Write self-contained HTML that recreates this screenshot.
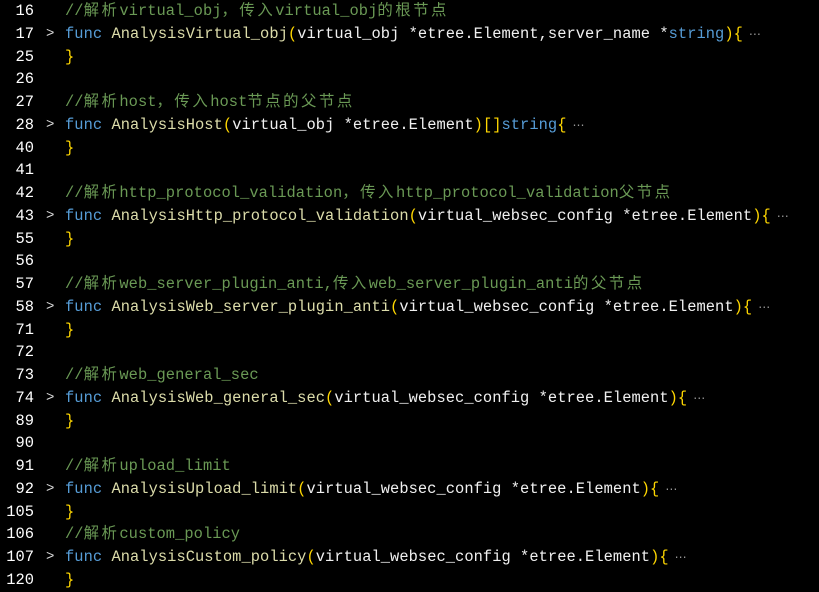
<!DOCTYPE html>
<html><head><meta charset="utf-8"><style>
html,body{margin:0;padding:0;background:#000;width:819px;height:591px;overflow:hidden}
.l{position:absolute;left:0;height:23px;line-height:23px;font-family:"Liberation Mono","Noto Sans CJK SC",monospace;font-size:15.4px;color:#f0f0f0;white-space:pre}
.n{position:absolute;left:0;width:34px;text-align:right;color:#fff}
.a{position:absolute;left:46px;color:#ddd;font-size:14px}
.c{position:absolute;left:65px;letter-spacing:0.05px}
.cm{color:#6a9955}
.z{letter-spacing:2.5px}
.k{color:#569cd6}
.f{color:#dcdcaa}
.p{color:#ffd700}
.e{color:#999;font-family:"DejaVu Sans",sans-serif;font-size:12px;margin-left:6px}
</style></head><body>
<div class="l" style="top:0px"><span class="n">16</span><span class="c cm">//<span class="z">解析</span>virtual_obj<span class="z">，传入</span>virtual_obj<span class="z">的根节点</span></span></div>
<div class="l" style="top:22.76px"><span class="n">17</span><span class="a">&gt;</span><span class="c"><span class="k">func</span> <span class="f">AnalysisVirtual_obj</span><span class="p">(</span>virtual_obj *etree.Element,server_name *<span class="k">string</span><span class="p">){</span><span class="e">⋯</span></span></div>
<div class="l" style="top:45.52px"><span class="n">25</span><span class="c p">}</span></div>
<div class="l" style="top:68.28px"><span class="n">26</span></div>
<div class="l" style="top:91.04px"><span class="n">27</span><span class="c cm">//<span class="z">解析</span>host<span class="z">，传入</span>host<span class="z">节点的父节点</span></span></div>
<div class="l" style="top:113.8px"><span class="n">28</span><span class="a">&gt;</span><span class="c"><span class="k">func</span> <span class="f">AnalysisHost</span><span class="p">(</span>virtual_obj *etree.Element<span class="p">)[]</span><span class="k">string</span><span class="p">{</span><span class="e">⋯</span></span></div>
<div class="l" style="top:136.56px"><span class="n">40</span><span class="c p">}</span></div>
<div class="l" style="top:159.32px"><span class="n">41</span></div>
<div class="l" style="top:182.08px"><span class="n">42</span><span class="c cm">//<span class="z">解析</span>http_protocol_validation<span class="z">，传入</span>http_protocol_validation<span class="z">父节点</span></span></div>
<div class="l" style="top:204.84px"><span class="n">43</span><span class="a">&gt;</span><span class="c"><span class="k">func</span> <span class="f">AnalysisHttp_protocol_validation</span><span class="p">(</span>virtual_websec_config *etree.Element<span class="p">){</span><span class="e">⋯</span></span></div>
<div class="l" style="top:227.6px"><span class="n">55</span><span class="c p">}</span></div>
<div class="l" style="top:250.36px"><span class="n">56</span></div>
<div class="l" style="top:273.12px"><span class="n">57</span><span class="c cm">//<span class="z">解析</span>web_server_plugin_anti,<span class="z">传入</span>web_server_plugin_anti<span class="z">的父节点</span></span></div>
<div class="l" style="top:295.88px"><span class="n">58</span><span class="a">&gt;</span><span class="c"><span class="k">func</span> <span class="f">AnalysisWeb_server_plugin_anti</span><span class="p">(</span>virtual_websec_config *etree.Element<span class="p">){</span><span class="e">⋯</span></span></div>
<div class="l" style="top:318.64px"><span class="n">71</span><span class="c p">}</span></div>
<div class="l" style="top:341.4px"><span class="n">72</span></div>
<div class="l" style="top:364.16px"><span class="n">73</span><span class="c cm">//<span class="z">解析</span>web_general_sec</span></div>
<div class="l" style="top:386.92px"><span class="n">74</span><span class="a">&gt;</span><span class="c"><span class="k">func</span> <span class="f">AnalysisWeb_general_sec</span><span class="p">(</span>virtual_websec_config *etree.Element<span class="p">){</span><span class="e">⋯</span></span></div>
<div class="l" style="top:409.68px"><span class="n">89</span><span class="c p">}</span></div>
<div class="l" style="top:432.44px"><span class="n">90</span></div>
<div class="l" style="top:455.2px"><span class="n">91</span><span class="c cm">//<span class="z">解析</span>upload_limit</span></div>
<div class="l" style="top:477.96px"><span class="n">92</span><span class="a">&gt;</span><span class="c"><span class="k">func</span> <span class="f">AnalysisUpload_limit</span><span class="p">(</span>virtual_websec_config *etree.Element<span class="p">){</span><span class="e">⋯</span></span></div>
<div class="l" style="top:500.72px"><span class="n">105</span><span class="c p">}</span></div>
<div class="l" style="top:523.48px"><span class="n">106</span><span class="c cm">//<span class="z">解析</span>custom_policy</span></div>
<div class="l" style="top:546.24px"><span class="n">107</span><span class="a">&gt;</span><span class="c"><span class="k">func</span> <span class="f">AnalysisCustom_policy</span><span class="p">(</span>virtual_websec_config *etree.Element<span class="p">){</span><span class="e">⋯</span></span></div>
<div class="l" style="top:569px"><span class="n">120</span><span class="c p">}</span></div>
</body></html>
